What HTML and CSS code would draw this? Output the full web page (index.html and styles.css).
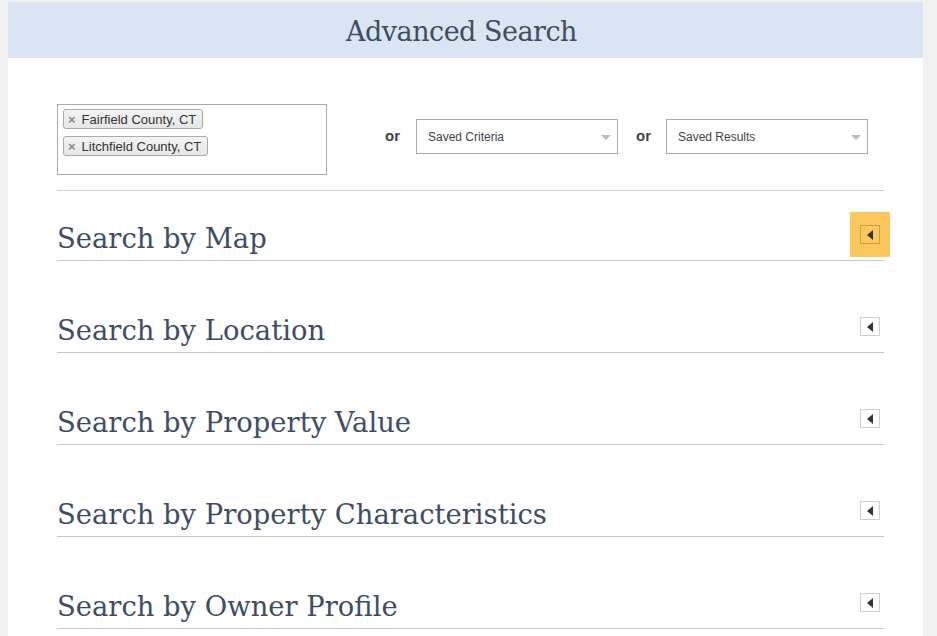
FILE: index.html
```html
<!DOCTYPE html>
<html lang="en">
<head>
    <meta charset="UTF-8">
    <title>Advanced Search</title>
    <link rel="stylesheet" href="styles.css">
</head>
<body>
    <div class="panel">
        <div class="panel-head">
            <h1>Advanced Search</h1>
        </div>
        <div class="panel-body">
            <div class="criteria">
                <div class="tag-box">
                    <span class="tag"><span class="tag-x">&#215;</span>Fairfield County, CT</span>
                    <span class="tag"><span class="tag-x">&#215;</span>Litchfield County, CT</span>
                </div>
                <span class="or">or</span>
                <div class="select">Saved Criteria<span class="caret"></span></div>
                <span class="or or-second">or</span>
                <div class="select">Saved Results<span class="caret"></span></div>
            </div>

            <div class="section section-first">
                <h2>Search by Map</h2>
                <div class="toggle active"><span class="toggle-box"><span class="arrow"></span></span></div>
            </div>
            <div class="section">
                <h2>Search by Location</h2>
                <div class="toggle"><span class="toggle-box"><span class="arrow"></span></span></div>
            </div>
            <div class="section">
                <h2>Search by Property Value</h2>
                <div class="toggle"><span class="toggle-box"><span class="arrow"></span></span></div>
            </div>
            <div class="section">
                <h2>Search by Property Characteristics</h2>
                <div class="toggle"><span class="toggle-box"><span class="arrow"></span></span></div>
            </div>
            <div class="section">
                <h2>Search by Owner Profile</h2>
                <div class="toggle"><span class="toggle-box"><span class="arrow"></span></span></div>
            </div>
        </div>
    </div>
</body>
</html>
```

FILE: styles.css
```css
* {
    box-sizing: border-box;
    margin: 0;
    padding: 0;
}

body {
    background: #f1f1f1;
    font-family: "Liberation Sans", Arial, sans-serif;
    color: #333;
    padding: 2px 14px 0 8px;
    height: 636px;
    overflow: hidden;
}

.panel {
    background: #fff;
    min-height: 700px;
}

.panel-head {
    background: #d9e5f2;
    height: 56px;
    display: flex;
    align-items: center;
    justify-content: center;
    padding: 2px 8px 0 0;
}

.panel-head h1 {
    font-family: "DejaVu Serif", serif;
    font-weight: normal;
    font-size: 27px;
    color: #3d4e64;
    letter-spacing: -0.5px;
}

.panel-body {
    padding: 46px 39px 0 49px;
}

.criteria {
    display: flex;
    align-items: flex-start;
    padding-bottom: 15px;
    border-bottom: 1px solid #d0d0d0;
}

.tag-box {
    width: 270px;
    height: 71px;
    border: 1px solid #aaa;
    padding: 4px 5px;
    display: flex;
    flex-direction: column;
    align-items: flex-start;
    gap: 7px;
}

.tag {
    display: inline-flex;
    align-items: center;
    height: 20px;
    padding: 0 6px 0 4px;
    border: 1px solid #aaa;
    border-radius: 3px;
    background: linear-gradient(#f4f4f4, #e6e6e6);
    font-size: 13px;
    color: #333;
}

.tag-x {
    color: #888;
    font-weight: bold;
    font-size: 13px;
    margin-right: 6px;
}

.or {
    font-weight: bold;
    font-size: 15px;
    color: #444;
    margin: 23px 16px 0 58px;
}

.or-second {
    margin-left: 18px;
    margin-right: 15px;
}

.select {
    position: relative;
    width: 202px;
    height: 35px;
    margin-top: 15px;
    border: 1px solid #aaa;
    padding: 0 11px;
    display: flex;
    align-items: center;
    font-size: 12px;
    color: #444;
}

.caret {
    position: absolute;
    right: 6px;
    top: 15px;
    border-left: 5px solid transparent;
    border-right: 5px solid transparent;
    border-top: 5px solid #bbb;
}

.section {
    display: flex;
    align-items: flex-end;
    justify-content: space-between;
    height: 92px;
    border-bottom: 1px solid #c8c8c8;
}

.section-first {
    height: 70px;
}

.section h2 {
    font-family: "DejaVu Serif", serif;
    font-weight: normal;
    font-size: 27.4px;
    line-height: 1;
    margin-bottom: 8px;
    color: #3d4e64;
}

.toggle {
    width: 40px;
    height: 45px;
    margin: 0 -6px 3px 0;
    display: flex;
    align-items: center;
    justify-content: center;
}

.toggle.active {
    background: #fcc75c;
}

.toggle-box {
    width: 20px;
    height: 19px;
    border: 1px solid #cfcfcf;
    display: flex;
    align-items: center;
    justify-content: center;
}

.toggle.active .toggle-box {
    border-color: #c9a04a;
}

.arrow {
    border-top: 5px solid transparent;
    border-bottom: 5px solid transparent;
    border-right: 6px solid #333;
    margin-left: -1px;
}
```
